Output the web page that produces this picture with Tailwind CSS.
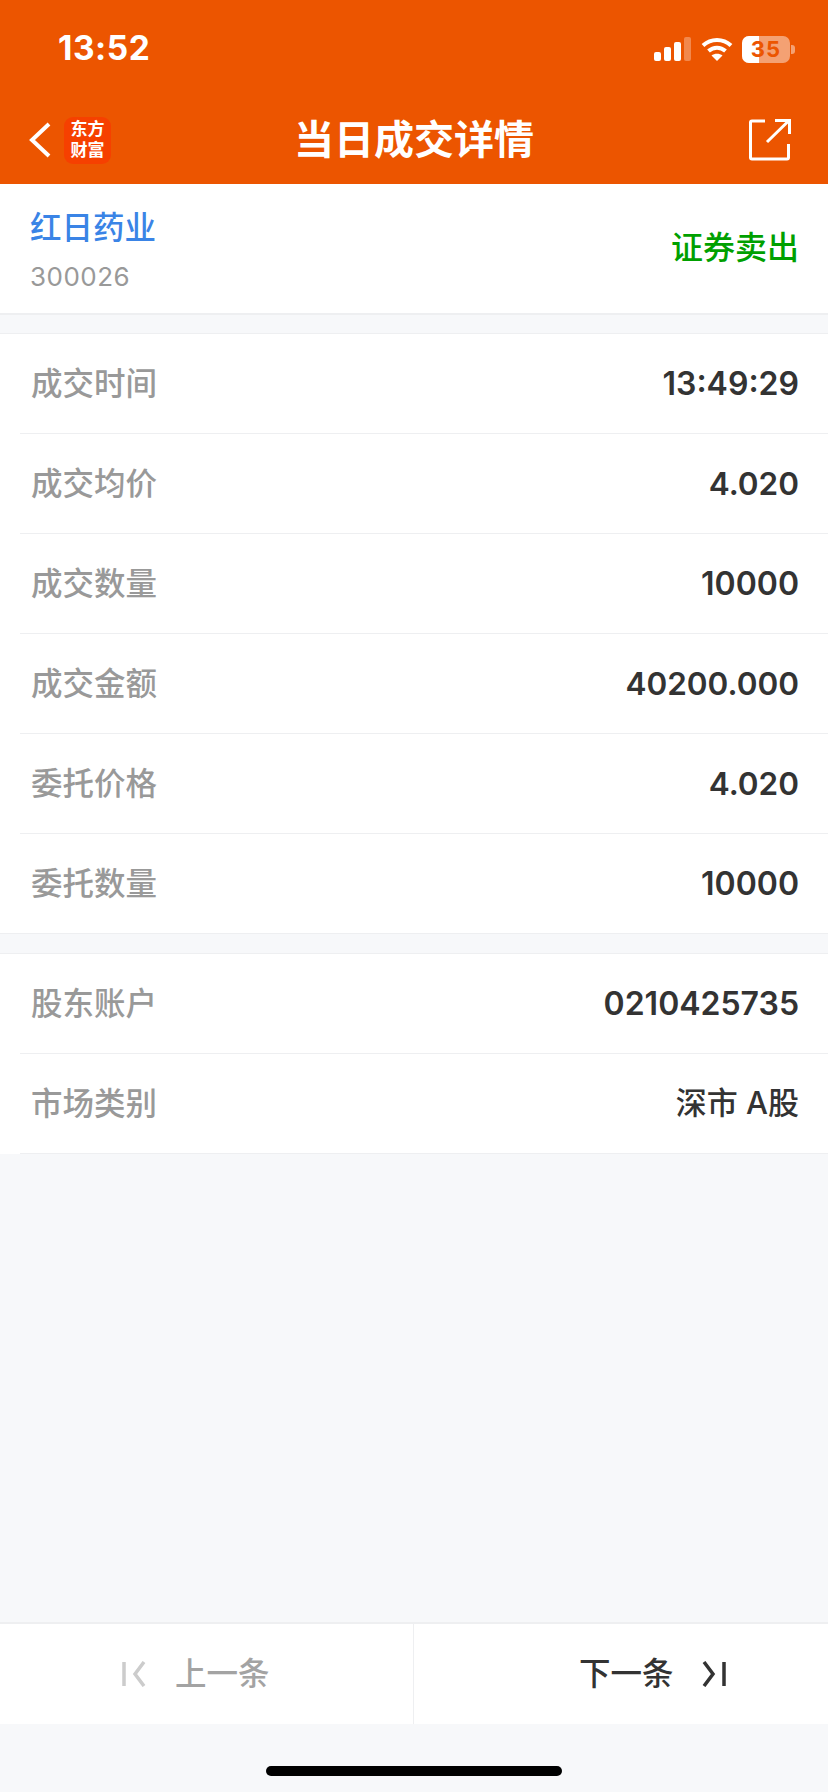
<!DOCTYPE html>
<html lang="zh-CN">
<head>
    <meta charset="UTF-8">
    <meta name="viewport" content="width=device-width, initial-scale=1.0">
    <title>当日成交详情</title>
    <script src="https://cdn.jsdelivr.net/npm/@tailwindcss/browser@4"></script>
</head>
<body class="bg-[#f7f8fa] font-['Inter','Noto_Sans_CJK_SC',sans-serif]">
<div class="w-[828px] h-[1792px] flex flex-col overflow-hidden">

    <!-- status bar + nav -->
    <header class="bg-[#ec5500] text-white h-[184px] shrink-0">
        <div class="h-[92px] pt-[6px] flex items-center justify-between pl-[58px] pr-[33px]">
            <span class="text-[33.5px] font-bold leading-none tracking-[0.5px]">13:52</span>
            <div class="flex items-center">
                <svg width="37" height="24" viewBox="0 0 37 24" fill="#fff">
                    <rect x="0" y="15" width="7" height="9" rx="2"/>
                    <rect x="10" y="10" width="7" height="14" rx="2"/>
                    <rect x="20" y="5" width="7" height="19" rx="2"/>
                    <rect x="30" y="0" width="7" height="24" rx="2" fill-opacity=".3"/>
                </svg>
                <svg class="ml-[10px]" width="32" height="24" viewBox="0 0 32 24" fill="none" stroke="#fff" stroke-width="4">
                    <path d="M2 8.5C10 1 22 1 30 8.5"/>
                    <path d="M7.5 14C12.5 9.5 19.5 9.5 24.5 14"/>
                    <path d="M16 24l-5.5-5.5C13.5 16 18.500 16 21.500 18.500Z" fill="#fff" stroke="none"/>
                </svg>
                <div class="relative ml-[9px] w-[48px] h-[27px] rounded-[7px] bg-white/45 overflow-hidden flex items-center justify-center">
                    <div class="absolute left-0 top-0 h-full w-[17px] bg-white"></div>
                    <span class="relative text-[#ec5500] text-[22px] font-bold leading-none tracking-[1px]">35</span>
                </div>
                <div class="ml-[1px] w-[4px] h-[9px] rounded-r-[3px] bg-white/45"></div>
            </div>
        </div>
        <nav class="relative h-[92px] pt-[4px] flex items-center justify-between pl-[29px] pr-[37px]">
            <div class="flex items-center">
                <svg width="22" height="36" viewBox="0 0 22 36" fill="none" stroke="#fff" stroke-width="4">
                    <path d="M20 2L3 18L20 34"/>
                </svg>
                <div class="ml-[13px] w-[47px] h-[47px] rounded-[9px] bg-[#f64000] text-center text-[17px] font-bold leading-[21px] pt-[2px]">东方<br>财富</div>
            </div>
            <h1 class="absolute left-0 right-0 text-center text-[40px] font-bold leading-none">当日成交详情</h1>
            <svg width="42" height="42" viewBox="0 0 42 42" fill="none" stroke="#fff" stroke-width="3">
                <path d="M16 2H3a1.500 1.500 0 0 0-1.500 1.500v35A1.500 1.500 0 0 0 3 40h35a1.500 1.500 0 0 0 1.500-1.500V25"/>
                <path d="M18 23L40 1.500M26 1.500H40.500V15"/>
            </svg>
        </nav>
    </header>

    <!-- stock -->
    <section class="bg-white h-[131px] shrink-0 border-b-2 border-[#eeeff1] flex items-center justify-between pl-[30px] pr-[29px]">
        <div class="flex flex-col">
            <span class="text-[31.5px] leading-[44px] font-medium text-[#3a84e6] mt-[3px]">红日药业</span>
            <span class="text-[26px] leading-[34px] mt-[10px] text-[#999999] tracking-[0.5px]">300026</span>
        </div>
        <span class="text-[32px] leading-none font-medium text-[#00a000] mt-[-2px]">证券卖出</span>
    </section>

    <!-- trade details -->
    <section class="mt-[18px] bg-white border-t border-[#eeeff1] shrink-0">
        <div class="ml-[20px] h-[100px] border-b border-[#eeeff1] flex items-center justify-between pl-[11px] pr-[29px]">
            <span class="text-[31.5px] font-medium text-[#999999]">成交时间</span>
            <span class="text-[32px] font-semibold text-[#333333]">13:49:29</span>
        </div>
        <div class="ml-[20px] h-[100px] border-b border-[#eeeff1] flex items-center justify-between pl-[11px] pr-[29px]">
            <span class="text-[31.5px] font-medium text-[#999999]">成交均价</span>
            <span class="text-[31.5px] font-semibold text-[#333333]">4.020</span>
        </div>
        <div class="ml-[20px] h-[100px] border-b border-[#eeeff1] flex items-center justify-between pl-[11px] pr-[29px]">
            <span class="text-[31.5px] font-medium text-[#999999]">成交数量</span>
            <span class="text-[32px] font-semibold text-[#333333]">10000</span>
        </div>
        <div class="ml-[20px] h-[100px] border-b border-[#eeeff1] flex items-center justify-between pl-[11px] pr-[29px]">
            <span class="text-[31.5px] font-medium text-[#999999]">成交金额</span>
            <span class="text-[31.5px] font-semibold text-[#333333]">40200.000</span>
        </div>
        <div class="ml-[20px] h-[100px] border-b border-[#eeeff1] flex items-center justify-between pl-[11px] pr-[29px]">
            <span class="text-[31.5px] font-medium text-[#999999]">委托价格</span>
            <span class="text-[31.5px] font-semibold text-[#333333]">4.020</span>
        </div>
        <div class="h-[100px] border-b border-[#eeeff1] flex items-center justify-between pl-[31px] pr-[29px]">
            <span class="text-[31.5px] font-medium text-[#999999]">委托数量</span>
            <span class="text-[32px] font-semibold text-[#333333]">10000</span>
        </div>
    </section>

    <!-- account -->
    <section class="mt-[19px] bg-white border-t border-[#eeeff1] shrink-0">
        <div class="ml-[20px] h-[100px] border-b border-[#eeeff1] flex items-center justify-between pl-[11px] pr-[29px]">
            <span class="text-[31.5px] font-medium text-[#999999]">股东账户</span>
            <span class="text-[32px] font-semibold text-[#333333]">0210425735</span>
        </div>
        <div class="ml-[20px] h-[100px] border-b border-[#eeeff1] flex items-center justify-between pl-[11px] pr-[29px]">
            <span class="text-[31.5px] font-medium text-[#999999]">市场类别</span>
            <span class="text-[31px] font-medium text-[#333333]">深市 A股</span>
        </div>
    </section>

    <div class="flex-1"></div>

    <!-- prev / next -->
    <footer class="bg-white h-[102px] shrink-0 border-t-2 border-[#eeeff1] flex">
        <div class="w-[414px] border-r border-[#eeeff1] flex items-center pl-[122px]">
            <svg width="24" height="26" viewBox="0 0 24 26" fill="none" stroke="#cccccc" stroke-width="3.5">
                <path d="M2 1V25M22 1L13 13L22 25"/>
            </svg>
            <span class="ml-[29px] text-[31.5px] font-medium leading-none text-[#a3a3a3]">上一条</span>
        </div>
        <div class="flex-1 flex items-center pl-[165px]">
            <span class="text-[31.5px] font-medium leading-none text-[#333333]">下一条</span>
            <svg class="ml-[28px]" width="24" height="26" viewBox="0 0 24 26" fill="none" stroke="#333333" stroke-width="3.5">
                <path d="M2 1L11 13L2 25M22 1V25"/>
            </svg>
        </div>
    </footer>

    <!-- home indicator -->
    <div class="h-[68px] shrink-0 flex justify-center pt-[42px]">
        <div class="w-[296px] h-[10px] rounded-full bg-black"></div>
    </div>
</div>
</body>
</html>
